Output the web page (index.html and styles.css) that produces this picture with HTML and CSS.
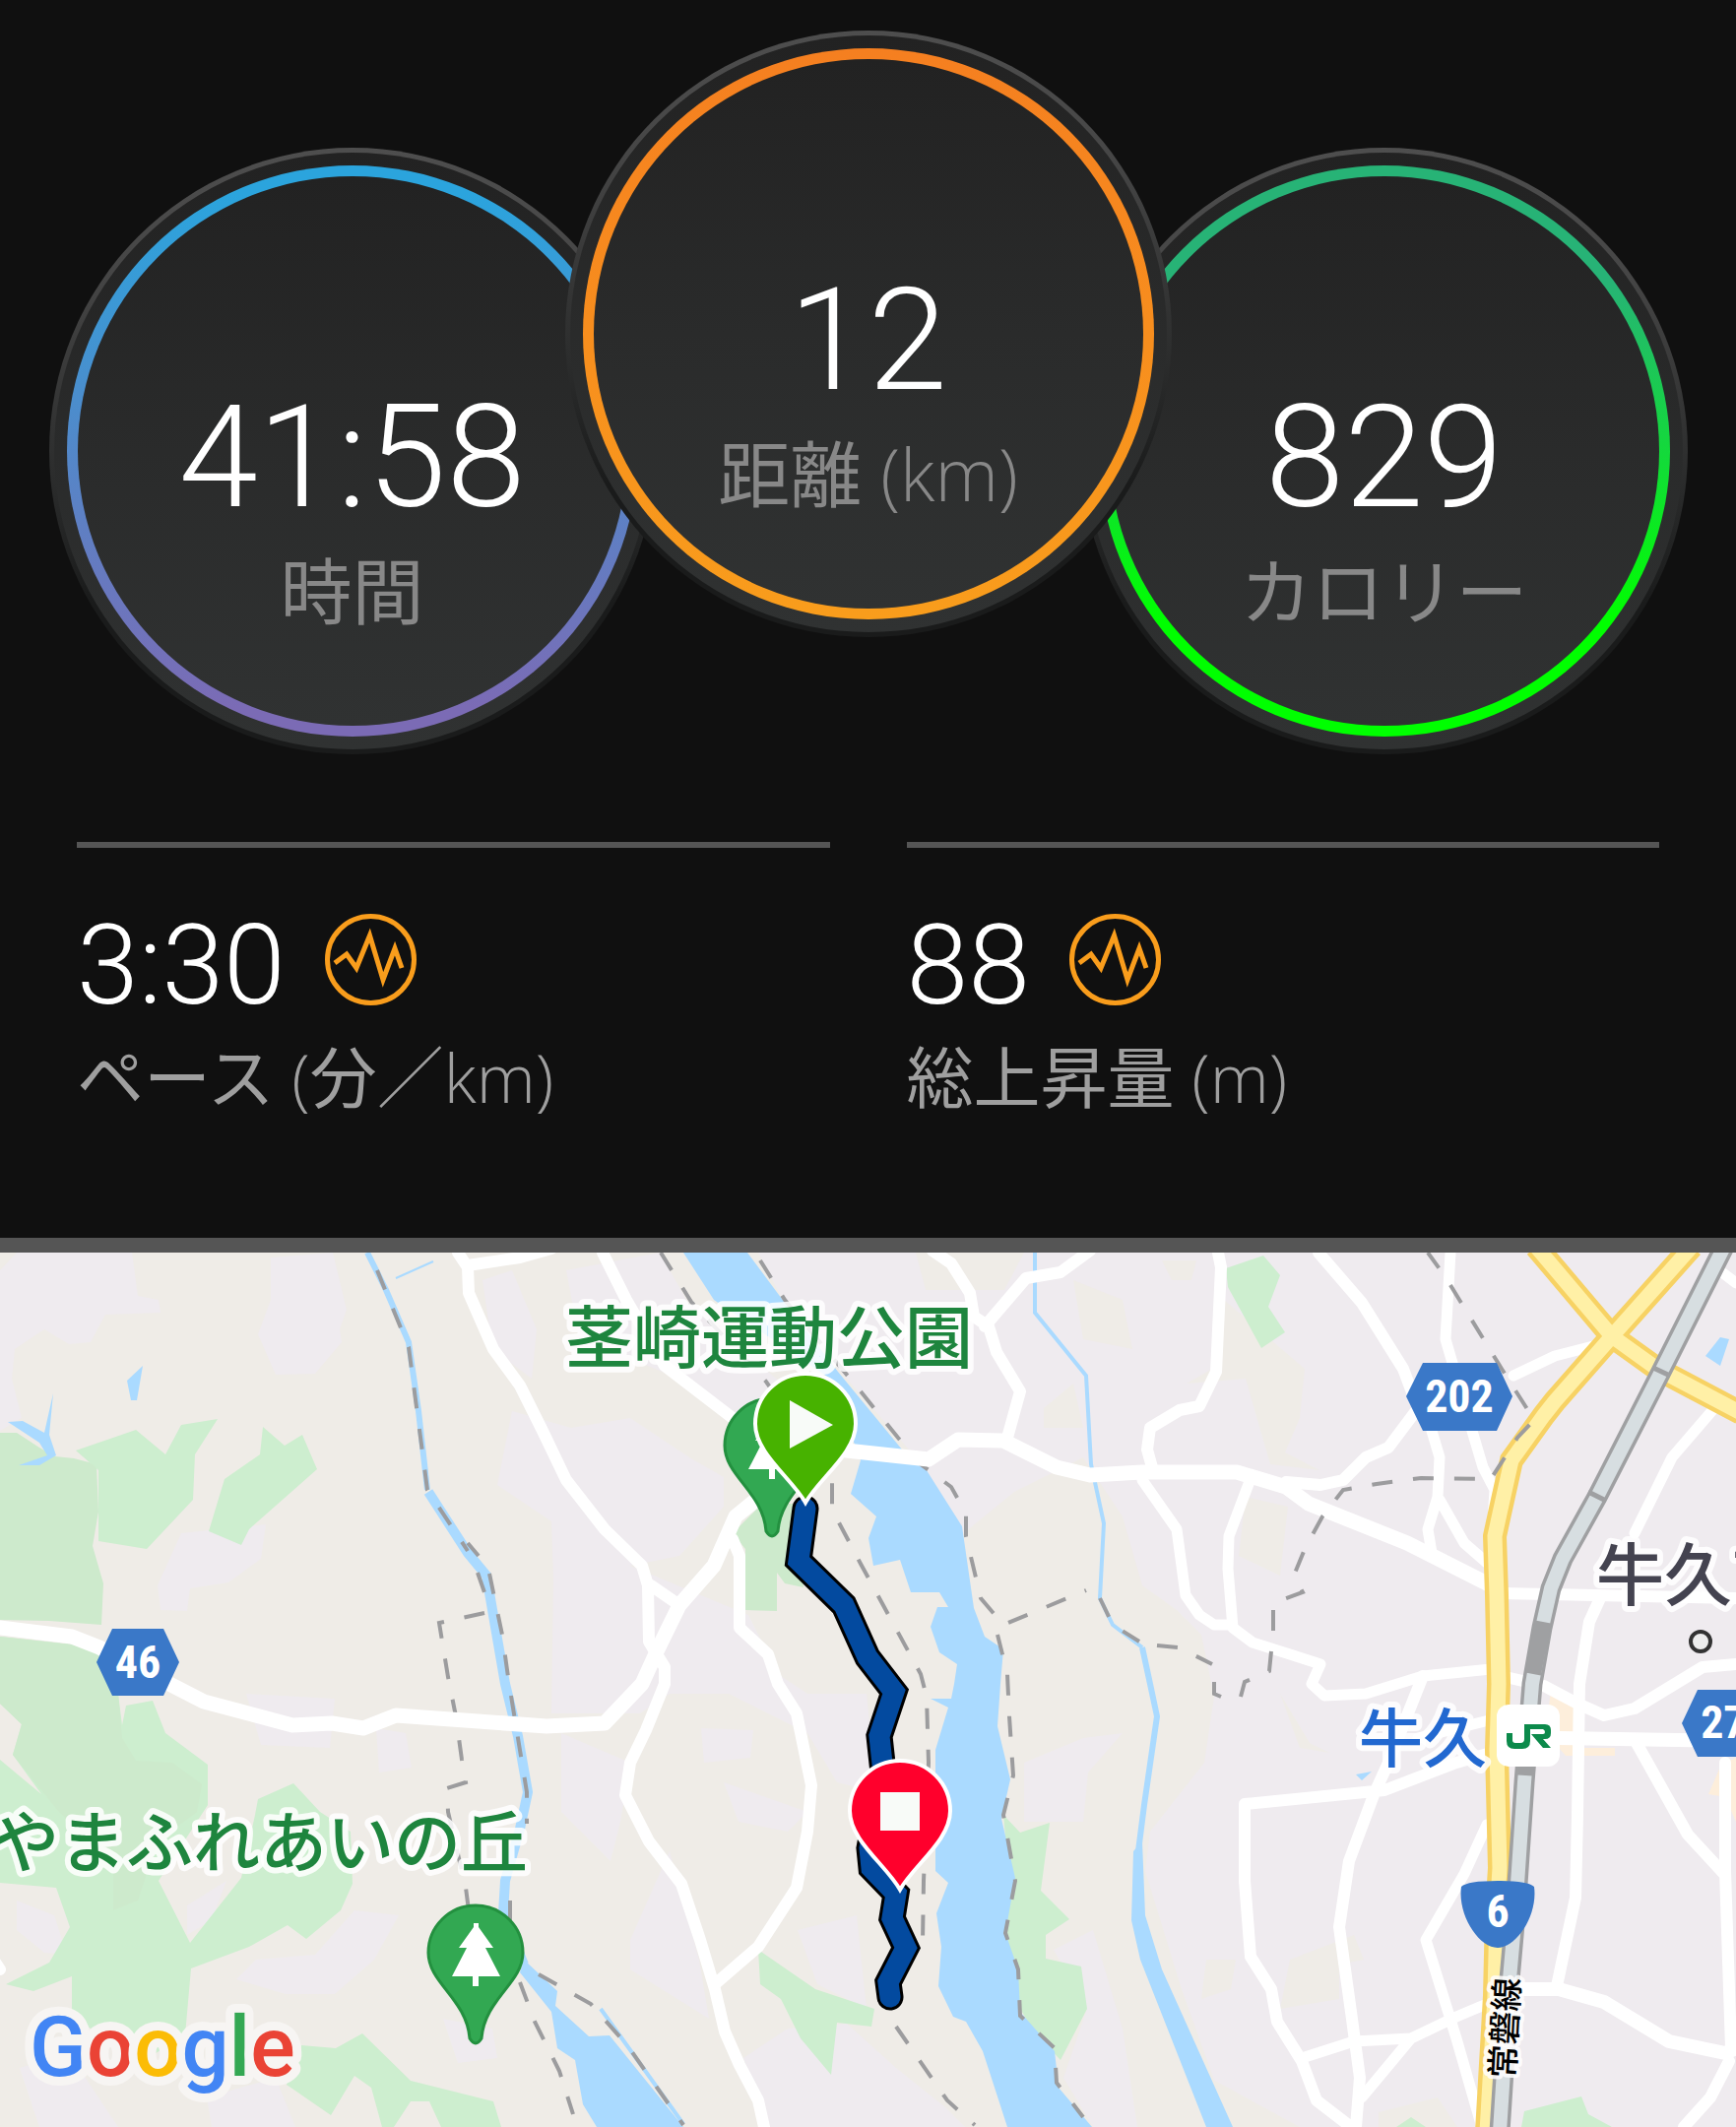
FILE: index.html
```html
<!DOCTYPE html>
<html lang="ja">
<head>
<meta charset="utf-8">
<meta name="viewport" content="width=device-width, initial-scale=1">
<title>アクティビティ</title>
<link rel="stylesheet" href="styles.css">
</head>
<body>
<main class="activity">
  <section class="summary">
    <div class="dials">
      <div class="dial dial-time">
        <div class="dial-face"><div class="dial-ring"><div class="dial-body">
          <span class="dial-value">41:58</span>
          <span class="dial-label">時間</span>
        </div></div></div>
      </div>
      <div class="dial dial-distance">
        <div class="dial-face"><div class="dial-ring"><div class="dial-body">
          <span class="dial-value">12</span>
          <span class="dial-label">距離 <span class="latin">(km)</span></span>
        </div></div></div>
      </div>
      <div class="dial dial-calories">
        <div class="dial-face"><div class="dial-ring"><div class="dial-body">
          <span class="dial-value">829</span>
          <span class="dial-label">カロリー</span>
        </div></div></div>
      </div>
    </div>
    <div class="stats">
      <div class="stat">
        <div class="stat-row">
          <span class="stat-value">3:30</span>
          <svg class="pulse" viewBox="0 0 93 93" aria-hidden="true"><circle cx="46.500" cy="46.500" r="44"/><path d="M10 50L22 41L32 55L45.500 22L59 67L71 35L78 55"/></svg>
        </div>
        <div class="stat-label">ペース <span class="latin">(</span>分<span class="latin">／km)</span></div>
      </div>
      <div class="stat">
        <div class="stat-row">
          <span class="stat-value">88</span>
          <svg class="pulse" viewBox="0 0 93 93" aria-hidden="true"><circle cx="46.500" cy="46.500" r="44"/><path d="M10 50L22 41L32 55L45.500 22L59 67L71 35L78 55"/></svg>
        </div>
        <div class="stat-label">総上昇量 <span class="latin">(m)</span></div>
      </div>
    </div>
  </section>
  <section class="map">
    <svg class="map-canvas" viewBox="0 1272 1763 888" role="img" aria-label="ルートマップ">
      <defs>
        <g id="park-pin">
          <path d="M-6 -6C-9 -46 -48 -62 -48 -93A48 48 0 0 1 48 -93C48 -62 9 -46 6 -6Q0 4 -6 -6Z" fill="#32a852" stroke="#23903f" stroke-width="3"/>
          <path d="M-2 -123H3V-119L18 -98H10L25 -69H3V-59H-3V-69H-24L-9 -98H-17L-2 -119Z" fill="#fff"/>
        </g>
        <path id="route-pin" d="M0 -2C-14 -27 -51 -52 -51 -82A51 51 0 0 1 51 -82C51 -52 14 -27 0 -2Z" stroke="#fff" stroke-width="4"/>
      </defs>

      <g class="urban">
        <path d="M0 1290L17 1272H134L140 1316L161 1320L163 1333L107 1335L92 1363L70 1365L45 1350L15 1370L12 1400L22 1440L0 1453Z"/>
        <path d="M275 1277L338 1272L352 1330L345 1350L347 1363L320 1395L280 1396L262 1355L275 1320Z"/>
        <path d="M184 1557L270 1548L265 1583L232 1607L193 1613L190 1636L163 1635L160 1610Z"/>
        <path d="M490 1300L520 1290L545 1350L540 1400L500 1370ZM575 1290L670 1272L700 1325L800 1410L740 1440L690 1400L640 1380L590 1370Z"/>
        <path d="M520 1433L580 1450L640 1440L700 1480L735 1500L735 1530L690 1580L640 1590L760 1640L790 1700L820 1720L880 1720L890 1820L850 1810L820 1760L740 1720L680 1720L650 1740L560 1740L562 1603L560 1545L505 1508Z"/>
        <path d="M17 1930L55 1945L68 1985L45 1983L17 1960ZM250 1720L340 1725L335 1775L265 1772ZM382 1755L412 1760L418 1795L385 1800ZM190 1935L230 1910L215 1950L190 1965ZM360 1940L405 1945L380 1990L340 2025L290 2025L240 2010L260 1990L320 1985ZM570 1760L640 1790L630 1850L620 1890L570 1840Z"/>
        <path d="M712 1755L765 1757L762 1785L715 1790ZM735 1810L820 1840L800 1860L750 1850ZM680 1880L710 1990L720 2050L640 2000L640 1970ZM810 1960L870 1945L880 2040L830 2015ZM860 2055L910 2100L960 2140L980 2160H780L755 2090L800 2060ZM1040 1790L1100 1765L1140 1760L1105 1800L1100 1850L1040 1850ZM1070 1980L1110 1960L1140 2060L1155 2160H1110L1080 2110L1104 2040Z"/>
        <path d="M20 2100L70 2085L120 2160H40ZM210 2130L280 2110L300 2160H215ZM450 2050L500 2060L505 2090L465 2095Z"/>
        <path d="M770 1272L800 1330L860 1400L930 1480L975 1560L1030 1515L1100 1480L1140 1540L1160 1610L1195 1635L1220 1660L1233 1723L1223 1790L1168 1860L1163 1900L1200 2020L1250 2160H1763V1272Z"/>
      </g>
      <g class="rural">
        <path d="M1243 1320L1325 1390L1320 1440L1305 1475L1340 1493L1290 1487L1265 1400L1205 1405L1240 1385ZM1265 1520L1308 1530L1300 1600L1258 1580ZM1060 1430L1090 1405L1100 1450L1060 1450ZM1180 1280L1215 1280L1210 1300L1190 1300ZM930 1272L1040 1272L1020 1310L940 1310ZM1090 1300L1140 1320L1150 1370L1100 1360Z"/>
        <path d="M1300 1720L1330 1770L1350 1780L1320 1775ZM1375 1965L1385 1990L1360 1995L1360 2030L1300 2040L1310 1990ZM1225 1990L1255 1990L1250 2020L1220 2030ZM1210 2100L1320 2160H1240ZM1400 2145L1460 2130L1480 2160H1400Z"/>
      </g>
      <path class="district" d="M1575 1715L1604 1732V1775H1640V1783H1590L1570 1760ZM1735 1822L1748 1792L1763 1785V1850L1752 1825Z"/>

      <g class="green">
        <path class="wood" d="M0 1455H17L40 1470L56 1479L75 1481L98 1487L100 1535L94 1570L105 1608L103 1650L50 1646L0 1645Z"/>
        <path d="M77 1473L138 1452L168 1477L184 1447L221 1441L198 1477L196 1523L149 1573L100 1565V1493Z"/>
        <path d="M267 1449L289 1468L307 1457L322 1492L253 1553L245 1569L212 1555L228 1502L264 1477Z"/>
        <path d="M0 1662L73 1670L101 1678L120 1720L124 1752L128 1732L155 1727L168 1760L211 1792V1833L161 1910L193 1973L245 1907L259 1843L262 1827L298 1811L325 1840L356 1860L358 1913L346 1940L311 1969L292 1955L253 1977L194 1999L188 2067L150 2090L73 2050V2007L34 2022L6 2015L50 1993L71 1957L57 1917L0 1912V1787L42 1822L13 1782L22 1751L0 1730Z"/>
        <path class="wood" d="M0 1662L73 1670L101 1678L120 1720L124 1765L138 1788L175 1790L205 1812L200 1840L160 1870L140 1930L115 1940V1890L60 1840L13 1782L22 1751L0 1730Z"/>
        <path d="M306 2077L341 2080L368 2065L417 2113L501 2134L509 2160H448L436 2134H417L400 2160H388L377 2120L360 2108L336 2148L291 2117Z"/>
        <path d="M770 1980L828 2020L888 2040L885 2058L850 2054L844 2107L813 2070L793 2030L772 2015Z"/>
        <path d="M1019 1843L1036 1861L1066 1851L1057 1920L1086 1949L1062 1965V1989L1098 1997L1104 2040L1077 2092L1050 2063L1030 2030L1015 1963L1025 1910Z"/>
        <path class="wood" d="M774 1527L744 1557L757 1573V1635L789 1636V1597L797 1608L816 1612L805 1527Z"/>
        <path d="M1245 1288L1283 1275L1300 1295L1288 1327L1305 1353L1281 1369L1247 1307Z"/>
        <path d="M1545 2160L1548 2144L1606 2129L1613 2147L1637 2160ZM1418 2160L1433 2150L1448 2160Z"/>
      </g>

      <g class="water">
        <path d="M694 1272H759L791 1315L851 1393L916 1472L939 1490L977 1550L989 1633L1000 1662L1019 1675L1016 1710L1013 1753L1026 1807L1017 1847L1031 1907L1021 1963L1034 2000L1036 2043L1071 2083L1075 2120L1109 2160H1023L998 2083L981 2053L968 2048L953 2017L956 1977L951 1943L963 1912L950 1900V1777L963 1734L945 1725H966L969 1710L972 1690L954 1678L945 1652L952 1632H963L954 1617H925L914 1584L887 1590L882 1562L890 1540L864 1517L874 1483L868 1467L843 1400L725 1320Z"/>
        <path d="M532 1990L566 2022L564 2037L598 2068L619 2067L694 2160H606L592 2137L584 2092L566 2080L560 2043L528 2003Z"/>
        <path d="M145 1387L139 1422H133L129 1402ZM54 1415L45 1455L23 1443L8 1444L40 1465L48 1478L19 1488H40L57 1478L50 1457ZM1377 1802L1393 1799L1383 1808ZM1747 1358L1756 1360L1747 1387L1732 1377Z"/>
        <path d="M1151 1880L1149 1950L1158 1990L1225 2160H1252L1180 2000L1163 1945L1160 1870Z"/>
      </g>
      <g class="stream">
        <path stroke-width="6" d="M373 1272L392 1310L415 1363L425 1433L434 1513"/>
        <path stroke-width="10" d="M435 1515L475 1577L494 1600L513 1710L526 1763L536 1820L528 1857L513 1910L511 1943L532 1995"/>
        <path stroke-width="4" d="M610 2040L694 2157M1051 1272V1333L1103 1397L1108 1487L1121 1547L1117 1623L1130 1650L1160 1673"/>
        <path stroke-width="2" d="M402 1298L440 1281"/>
        <path stroke-width="6" d="M1160 1673L1168 1710L1175 1743L1162 1833L1156 1880"/>
      </g>

      <g class="boundary">
        <path d="M383 1290L415 1368L434 1513L475 1575M475 1567L486 1580M485 1597L493 1620M497 1598L510 1660L517 1710L535 1820V1852"/>
        <path d="M492 1638L446 1648L455 1703L463 1743L469 1787L473 1810L454 1816L455 1840L473 1917L476 1940M518 1930V1960M528 2013L543 2053L568 2103L582 2147"/>
        <path d="M547 2005L600 2035L637 2077L694 2158M671 1272L702 1322L778 1403L845 1500V1533L874 1588L935 1700L941 1723L943 1790L938 1910L937 1973M910 2058L962 2133L990 2158"/>
        <path d="M772 1280L797 1320L874 1413L912 1460L935 1487L966 1510L981 1537V1560L996 1623L1019 1650L1103 1615M1013 1660L1023 1700L1025 1743L1029 1803L1019 1843L1031 1910L1021 1963L1034 2000L1036 2047L1071 2080L1073 2115L1100 2150"/>
      </g>

      <g class="road">
        <path d="M465 1272L475 1287L476 1313L501 1370L528 1407L551 1453L575 1503L614 1553L652 1590L658 1610L659 1667L675 1693V1710L656 1757L640 1790L635 1823L659 1870L692 1913L711 1970L726 2020L736 2063L751 2097L770 2133L776 2160"/>
        <path d="M475 1285L528 1277L560 1268M612 1272L636 1320L675 1387L744 1440L784 1480"/>
        <path stroke-width="15" d="M784 1510L747 1540L725 1590L690 1630L667 1677L652 1710L614 1750L555 1753L402 1742L369 1755L337 1750L297 1752L207 1728L172 1710L101 1673L73 1662L0 1653"/>
        <path d="M661 1610L690 1630M744 1563L751 1580V1653L780 1680L790 1710L809 1740L824 1813L820 1860L809 1917L770 1977L726 2015M-8 1988L0 2000"/>
        <path stroke-width="15" d="M850 1472L943 1482L973 1462L1019 1463L1073 1490L1107 1498L1160 1495H1256L1306 1510L1329 1527L1429 1567L1514 1610"/>
        <path d="M947 1270L966 1283L985 1313L989 1337L1004 1347L1012 1373L1036 1413L1023 1460M1107 1270L1077 1292L1042 1298L1000 1347"/>
        <path d="M1237 1272L1240 1287L1235 1393L1218 1428L1198 1432L1168 1450L1165 1472L1170 1490M1339 1272L1383 1323L1425 1390L1440 1430L1410 1470L1387 1480L1364 1503L1341 1508L1306 1505"/>
        <path stroke-width="11" d="M1473 1272L1468 1360L1495 1453L1506 1490L1518 1513L1515 1560M1454 1453L1462 1480L1460 1520L1450 1553L1454 1577M1462 1523L1487 1567L1510 1587M1537 1397L1579 1377L1618 1367"/>
        <path stroke-width="11" d="M1160 1503L1195 1553L1204 1620L1218 1640L1233 1650H1250M1268 1507L1248 1560L1247 1593L1252 1653L1272 1668L1310 1680L1341 1690L1332 1710L1345 1722L1387 1720L1445 1702L1514 1695"/>
        <path d="M1525 1618L1763 1623M1529 1703L1568 1712L1602 1730L1629 1742L1660 1735L1729 1693L1763 1690M1625 1623L1614 1647L1604 1710L1602 1843L1600 1927L1581 2017"/>
        <path stroke-width="14" d="M1525 2020H1583L1629 2033L1695 2073L1752 2085L1763 2080M1583 1765L1763 1768"/>
        <path d="M1756 2093L1737 2130L1710 2160M1662 1770L1714 1863L1750 1902M1752 1790V1900L1758 2080"/>
        <path d="M1514 1780L1479 1790L1406 1818L1264 1832V1910L1270 1987L1291 2020L1297 2053L1322 2093L1337 2133L1372 2160M1445 1702L1410 1790L1395 1823L1370 1890L1360 1957L1372 2043L1381 2110L1377 2160"/>
        <path stroke-width="11" d="M1510 1853L1487 1903L1448 1970L1479 2070L1504 2157M1510 2035L1479 2048L1433 2070L1375 2073L1322 2090M1433 2070L1383 2130M1741 1430L1698 1480L1660 1557M1750 1293L1763 1303M1440 1765L1520 1745"/>
      </g>

      <g class="highway-edge">
        <path d="M1560 1266L1637 1357L1683 1390L1768 1435M1718 1266L1637 1357L1579 1423L1568 1437L1535 1483L1523 1537L1518 1560L1520 1620L1522 1710L1520 1777L1523 1897L1520 1943L1518 2027L1510 2165"/>
      </g>
      <g class="highway">
        <path d="M1560 1266L1637 1357L1683 1390L1768 1435M1718 1266L1637 1357L1579 1423L1568 1437L1535 1483L1523 1537L1518 1560L1520 1620L1522 1710L1520 1777L1523 1897L1520 1943L1518 2027L1510 2165"/>
      </g>
      <g class="rail">
        <path stroke="#9fa0a2" stroke-width="21" d="M1751 1266L1687 1393L1622 1520L1587 1583L1575 1613L1566 1653L1556 1710L1548 1810L1539 1943L1533 2010L1523 2165"/>
        <path stroke="#d7dee1" stroke-width="14" d="M1751 1266L1687 1393L1622 1520L1587 1583L1575 1613L1566 1653L1556 1710L1548 1810L1539 1943L1533 2010L1523 2165"/>
        <path stroke="#9fa0a2" stroke-width="16" d="M1567 1647L1557 1700M1550 1788L1549 1803"/>
        <path stroke="#9fa0a2" stroke-width="5" d="M1679 1389L1696 1397M1613 1515L1631 1524"/>
      </g>
      <g class="boundary">
        <path d="M1117 1623L1130 1650L1157 1667M1175 1671L1197 1673L1231 1690M1233 1708V1720L1240 1723M1260 1723L1264 1708L1289 1697L1293 1657V1628L1323 1617L1314 1600L1325 1573L1343 1540L1364 1513L1398 1507L1443 1501L1514 1502L1541 1460L1558 1442L1525 1390L1468 1297L1450 1272"/>
      </g>

      <g class="shield">
        <path d="M98 1688L114 1654H166L182 1688L166 1722H114ZM1428 1418L1445 1384H1520L1536 1418L1520 1453H1445ZM1708 1750L1724 1716H1790V1784H1724ZM1484 1916Q1490 1910 1521 1910T1558 1916C1562 1945 1540 1978 1521 1978S1480 1945 1484 1916Z"/>
        <text x="140" y="1704">46</text>
        <text x="1482" y="1434">202</text>
        <text x="1762" y="1765">277</text>
        <text x="1521" y="1957">6</text>
      </g>

      <g class="place">
        <text class="park" x="574" y="1384">茎崎運動公園</text>
        <text class="park park-wide" x="536" y="1896">やまふれあいの丘</text>
        <text class="city" x="1621" y="1625">牛久市</text>
        <text class="station" x="1380" y="1789">牛久</text>
        <text class="line" x="1538" y="2111" transform="rotate(-87 1538 2111)">常磐線</text>
      </g>
      <circle cx="1727" cy="1667" r="10" fill="#eee" stroke="#333" stroke-width="4"/>
      <rect x="1520" y="1731" width="64" height="63" rx="12" fill="#fff"/>
      <path d="M1530 1760H1536V1767Q1536 1770 1539 1770H1544Q1548 1770 1548 1766V1751H1569Q1575 1751 1575 1757V1760Q1575 1766 1569 1766H1567L1575 1775H1567L1555 1761H1567Q1569 1761 1569 1759T1567 1756H1554V1768Q1554 1776 1546 1776H1538Q1530 1776 1530 1768Z" fill="#0c8a4b"/>

      <use href="#park-pin" x="483" y="2076"/>
      <use href="#park-pin" x="784" y="1561"/>
      <path class="route-edge" d="M818 1532L811 1585L857 1630L881 1683L908 1718L893 1763L897 1800L883 1877L885 1897L910 1923L906 1948L920 1978L902 2013L904 2028"/>
      <path class="route" d="M818 1532L811 1585L857 1630L881 1683L908 1718L893 1763L897 1800L883 1877L885 1897L910 1923L906 1948L920 1978L902 2013L904 2028"/>
      <use href="#route-pin" x="818" y="1528" fill="#47b200"/>
      <path d="M802 1422L846 1447L802 1471Z" fill="#f8fbf8"/>
      <use href="#route-pin" x="914" y="1921" fill="#ff002c"/>
      <path d="M894 1820H934V1859H894Z" fill="#f8fbf8"/>

      <text class="google" x="30" y="2108"><tspan fill="#4285f4">G</tspan><tspan fill="#ea4335">o</tspan><tspan fill="#fbbc05">o</tspan><tspan fill="#4285f4">g</tspan><tspan fill="#34a853">l</tspan><tspan fill="#ea4335">e</tspan></text>
    </svg>
  </section>
</main>
</body>
</html>
```
FILE: styles.css
```css
* {
  box-sizing: border-box;
}

body {
  margin: 0;
  background: #101010;
  font-family: "Open Sans", "Noto Sans CJK JP", sans-serif;
}

.summary {
  padding: 31px 0 123px;
  background: #101010;
  border-bottom: 15px solid #555;
}

.dials {
  display: flex;
  justify-content: center;
  align-items: flex-start;
}

.dial {
  flex: 0 1 616px;
  aspect-ratio: 1;
  margin-top: 119px;
  padding: 5px;
  border-radius: 50%;
  background: linear-gradient(#4e4e4e, #464646 20%, #2b2c2c 55%, #1a1b1b 75%, #1a1b1b);
}

.dial-distance {
  position: relative;
  z-index: 1;
  margin: 0 -92px;
}

.dial-face {
  height: 100%;
  padding: 13px;
  border-radius: 50%;
  background: linear-gradient(#222, #2a2b2b 50%, #303232);
}

.dial-ring {
  height: 100%;
  padding: 11px;
  border-radius: 50%;
}

.dial-time .dial-ring {
  background: linear-gradient(#2ba4dd, #2ba4dd 5%, #7b6bb5 95%);
}

.dial-distance .dial-ring {
  background: linear-gradient(#f57f20, #f99d1c);
}

.dial-calories .dial-ring {
  background: linear-gradient(#27b376, #27b376 20%, #0f0 80%);
}

.dial-body {
  display: flex;
  flex-direction: column;
  align-items: center;
  gap: 19px;
  height: 100%;
  padding-top: 210px;
  border-radius: 50%;
  background: linear-gradient(#222, #2a2b2b 50%, #303232);
}

.dial-value {
  color: #fff;
  font-family: Roboto, sans-serif;
  font-size: 145px;
  font-weight: 300;
  line-height: 150px;
}

.dial-label {
  color: #888;
  font-size: 73px;
  line-height: 84px;
  white-space: nowrap;
}

.latin {
  font-weight: 300;
}

.stats {
  display: grid;
  grid-template-columns: 1fr 1fr;
  gap: 78px;
  margin-top: 89px;
  padding: 0 78px;
}

.stat {
  padding-top: 60px;
  border-top: 6px solid #555;
}

.stat-row {
  display: flex;
  align-items: flex-start;
  gap: 40px;
  height: 120px;
}

.stat-value {
  color: #fff;
  font-family: Roboto, sans-serif;
  font-size: 113px;
  font-weight: 300;
  line-height: 120px;
}

.pulse {
  width: 93px;
  height: 93px;
  margin-top: 7px;
  fill: none;
  stroke: #f99d1c;
  stroke-width: 5;
}

.stat-label {
  margin-top: 13px;
  color: #9f9f9f;
  font-size: 68px;
  line-height: 80px;
}

.map {
  background: #efece7;
}

.map-canvas {
  display: block;
  width: 100%;
}

.urban {
  fill: #efebef;
}

.rural {
  fill: #efece7;
}

.district {
  fill: #fdeedb;
}

.green {
  fill: #cdeecf;
}

.wood {
  fill: #cdeacc;
}

.water {
  fill: #aadaff;
}

.stream {
  fill: none;
  stroke: #aadaff;
}

.boundary {
  fill: none;
  stroke: #9c9c9e;
  stroke-width: 4;
  stroke-dasharray: 21 21;
}

.road {
  fill: none;
  stroke: #fff;
  stroke-width: 12;
  stroke-linejoin: round;
  stroke-linecap: round;
}

.highway-edge {
  fill: none;
  stroke: #f7d264;
  stroke-width: 24;
}

.highway {
  fill: none;
  stroke: #fff0a6;
  stroke-width: 15;
}

.rail {
  fill: none;
}

.shield {
  fill: #3a78c8;
}

.shield text {
  fill: #fff;
  font-family: "Roboto Condensed", "Open Sans Condensed", "Liberation Sans", sans-serif;
  font-size: 46px;
  font-weight: 700;
  text-anchor: middle;
}

.place text {
  font-family: "Noto Sans CJK JP", sans-serif;
  font-weight: 500;
  paint-order: stroke;
  stroke: rgba(255, 255, 255, 0.85);
  stroke-width: 12px;
  stroke-linejoin: round;
}

.place .park {
  fill: #1e853e;
  font-size: 69px;
}

.place .park-wide {
  font-size: 68px;
  text-anchor: end;
}

.place .city {
  fill: #444350;
  font-size: 69px;
}

.place .station {
  fill: #2268d0;
  font-size: 65px;
}

.place .line {
  fill: #000;
  font-size: 34px;
  stroke-width: 8px;
}

.route-edge {
  fill: none;
  stroke: #000;
  stroke-width: 27;
  stroke-linecap: round;
}

.route {
  fill: none;
  stroke: #034a9f;
  stroke-width: 21;
  stroke-linecap: round;
}

.google {
  font-family: Roboto, sans-serif;
  font-size: 85px;
  font-weight: 500;
  paint-order: stroke;
  stroke: #f7f5f3;
  stroke-width: 18px;
  stroke-linejoin: round;
}
```
